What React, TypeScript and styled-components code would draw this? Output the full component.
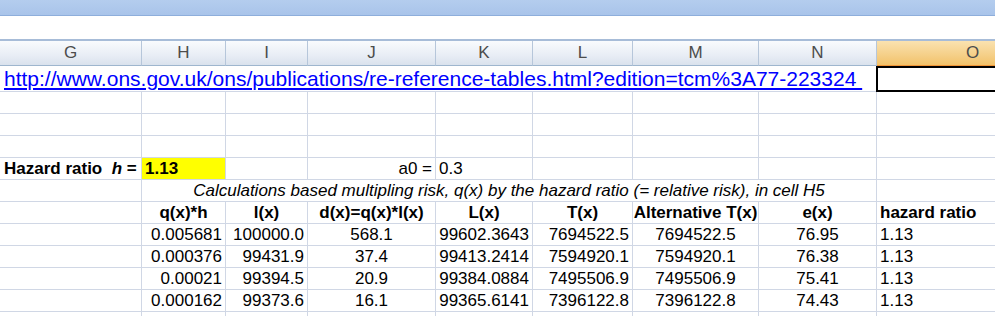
import React from "react";
import styled, { createGlobalStyle } from "styled-components";

type Align = "left" | "right" | "center";

const cols = [142, 84, 82, 128, 97, 100, 126, 118, 192];
const letters = ["G", "H", "I", "J", "K", "L", "M", "N", "O"];

const headers = [
  "q(x)*h",
  "l(x)",
  "d(x)=q(x)*l(x)",
  "L(x)",
  "T(x)",
  "Alternative T(x)",
  "e(x)",
];

const rows = [
  ["0.005681", "100000.0", "568.1", "99602.3643", "7694522.5", "7694522.5", "76.95", "1.13"],
  ["0.000376", "99431.9", "37.4", "99413.2414", "7594920.1", "7594920.1", "76.38", "1.13"],
  ["0.00021", "99394.5", "20.9", "99384.0884", "7495506.9", "7495506.9", "75.41", "1.13"],
  ["0.000162", "99373.6", "16.1", "99365.6141", "7396122.8", "7396122.8", "74.43", "1.13"],
];

const dataAlign: Align[] = ["right", "right", "center", "right", "right", "center", "center", "left"];

const GlobalStyle = createGlobalStyle`
  html, body {
    margin: 0;
    padding: 0;
    background: #ffffff;
    overflow: hidden;
  }
  body {
    font-family: "Liberation Sans", Arial, sans-serif;
  }
`;

const Window = styled.div`
  width: 995px;
  height: 316px;
  overflow: hidden;
  background: #fff;
`;

const TitleBar = styled.div`
  height: 15px;
  background: linear-gradient(#b4cdee, #a9c4ea);
  border-bottom: 1px solid #8eaedb;
`;

const FormulaStrip = styled.div`
  height: 23px;
  background: #fff;
  border-bottom: 2px solid #a7bcd8;
`;

const Sheet = styled.div`
  display: grid;
  grid-template-columns: ${cols.map((c) => c + "px").join(" ")};
  grid-template-rows: 25px 26px;
  grid-auto-rows: 22px;
`;

const ColHead = styled.div<{ $selected?: boolean }>`
  display: flex;
  align-items: center;
  justify-content: center;
  font-size: 17px;
  color: #4c4c4c;
  background: ${(p) =>
    p.$selected
      ? "linear-gradient(#fae2b0, #f5cf87 60%, #f2c26a)"
      : "linear-gradient(#f9fbfd, #e8edf5 60%, #dae2ed)"};
  border-right: 1px solid ${(p) => (p.$selected ? "#e8b45c" : "#b6c6da")};
  border-bottom: 1px solid ${(p) => (p.$selected ? "#f29536" : "#9eb6ce")};
`;

const Cell = styled.div<{
  $align?: Align;
  $bold?: boolean;
  $italic?: boolean;
  $span?: number;
}>`
  grid-column: span ${(p) => p.$span || 1};
  display: flex;
  align-items: center;
  justify-content: ${(p) =>
    p.$align === "right" ? "flex-end" : p.$align === "center" ? "center" : "flex-start"};
  padding: 1px 3px 0;
  font-size: 17px;
  color: #000;
  font-weight: ${(p) => (p.$bold ? 700 : 400)};
  font-style: ${(p) => (p.$italic ? "italic" : "normal")};
  border-right: 1px solid #d0d7e5;
  border-bottom: 1px solid #d0d7e5;
  white-space: nowrap;
  overflow: visible;
  min-width: 0;
`;

const LinkRow = styled(Cell)`
  padding-left: 4px;
`;

const Link = styled.a`
  font-size: 21px;
  color: #0000ff;
  text-decoration: underline;
  white-space: pre;
`;

const Selected = styled.div`
  box-sizing: border-box;
  border: 2px solid #000;
  margin-left: -1px;
`;

const Yellow = styled(Cell)`
  background: #ffff00;
`;

const HazardLabel = styled(Cell)`
  justify-content: flex-start;
  padding-left: 4px;
  white-space: pre;
`;

export default function App() {
  return (
    <>
      <GlobalStyle />
      <Window>
        <TitleBar />
        <FormulaStrip />
        <Sheet>
          {letters.map((l) => (
            <ColHead key={l} $selected={l === "O"}>
              {l}
            </ColHead>
          ))}

          <LinkRow $span={8}>
            <Link>
              {"http://www.ons.gov.uk/ons/publications/re-reference-tables.html?edition=tcm%3A77-223324 "}
            </Link>
          </LinkRow>
          <Selected />

          {[0, 1, 2].map((r) =>
            letters.map((l) => <Cell key={r + l} />)
          )}

          <HazardLabel $bold>
            {"Hazard ratio  "}
            <i>h</i>
            {" ="}
          </HazardLabel>
          <Yellow $bold>1.13</Yellow>
          <Cell />
          <Cell $align="right">a0 =</Cell>
          <Cell>0.3</Cell>
          <Cell />
          <Cell />
          <Cell />
          <Cell />

          <Cell />
          <Cell $span={7} $italic $align="center">
            Calculations based multipling risk, q(x) by the hazard ratio (= relative risk), in cell H5
          </Cell>
          <Cell />

          <Cell />
          {headers.map((h) => (
            <Cell key={h} $bold $align="center">
              {h}
            </Cell>
          ))}
          <Cell $bold>hazard ratio</Cell>

          {rows.map((row, i) => (
            <React.Fragment key={i}>
              <Cell />
              {row.map((v, j) => (
                <Cell key={j} $align={dataAlign[j]}>
                  {v}
                </Cell>
              ))}
            </React.Fragment>
          ))}

          {letters.map((l) => (
            <Cell key={"x" + l} />
          ))}
        </Sheet>
      </Window>
    </>
  );
}
